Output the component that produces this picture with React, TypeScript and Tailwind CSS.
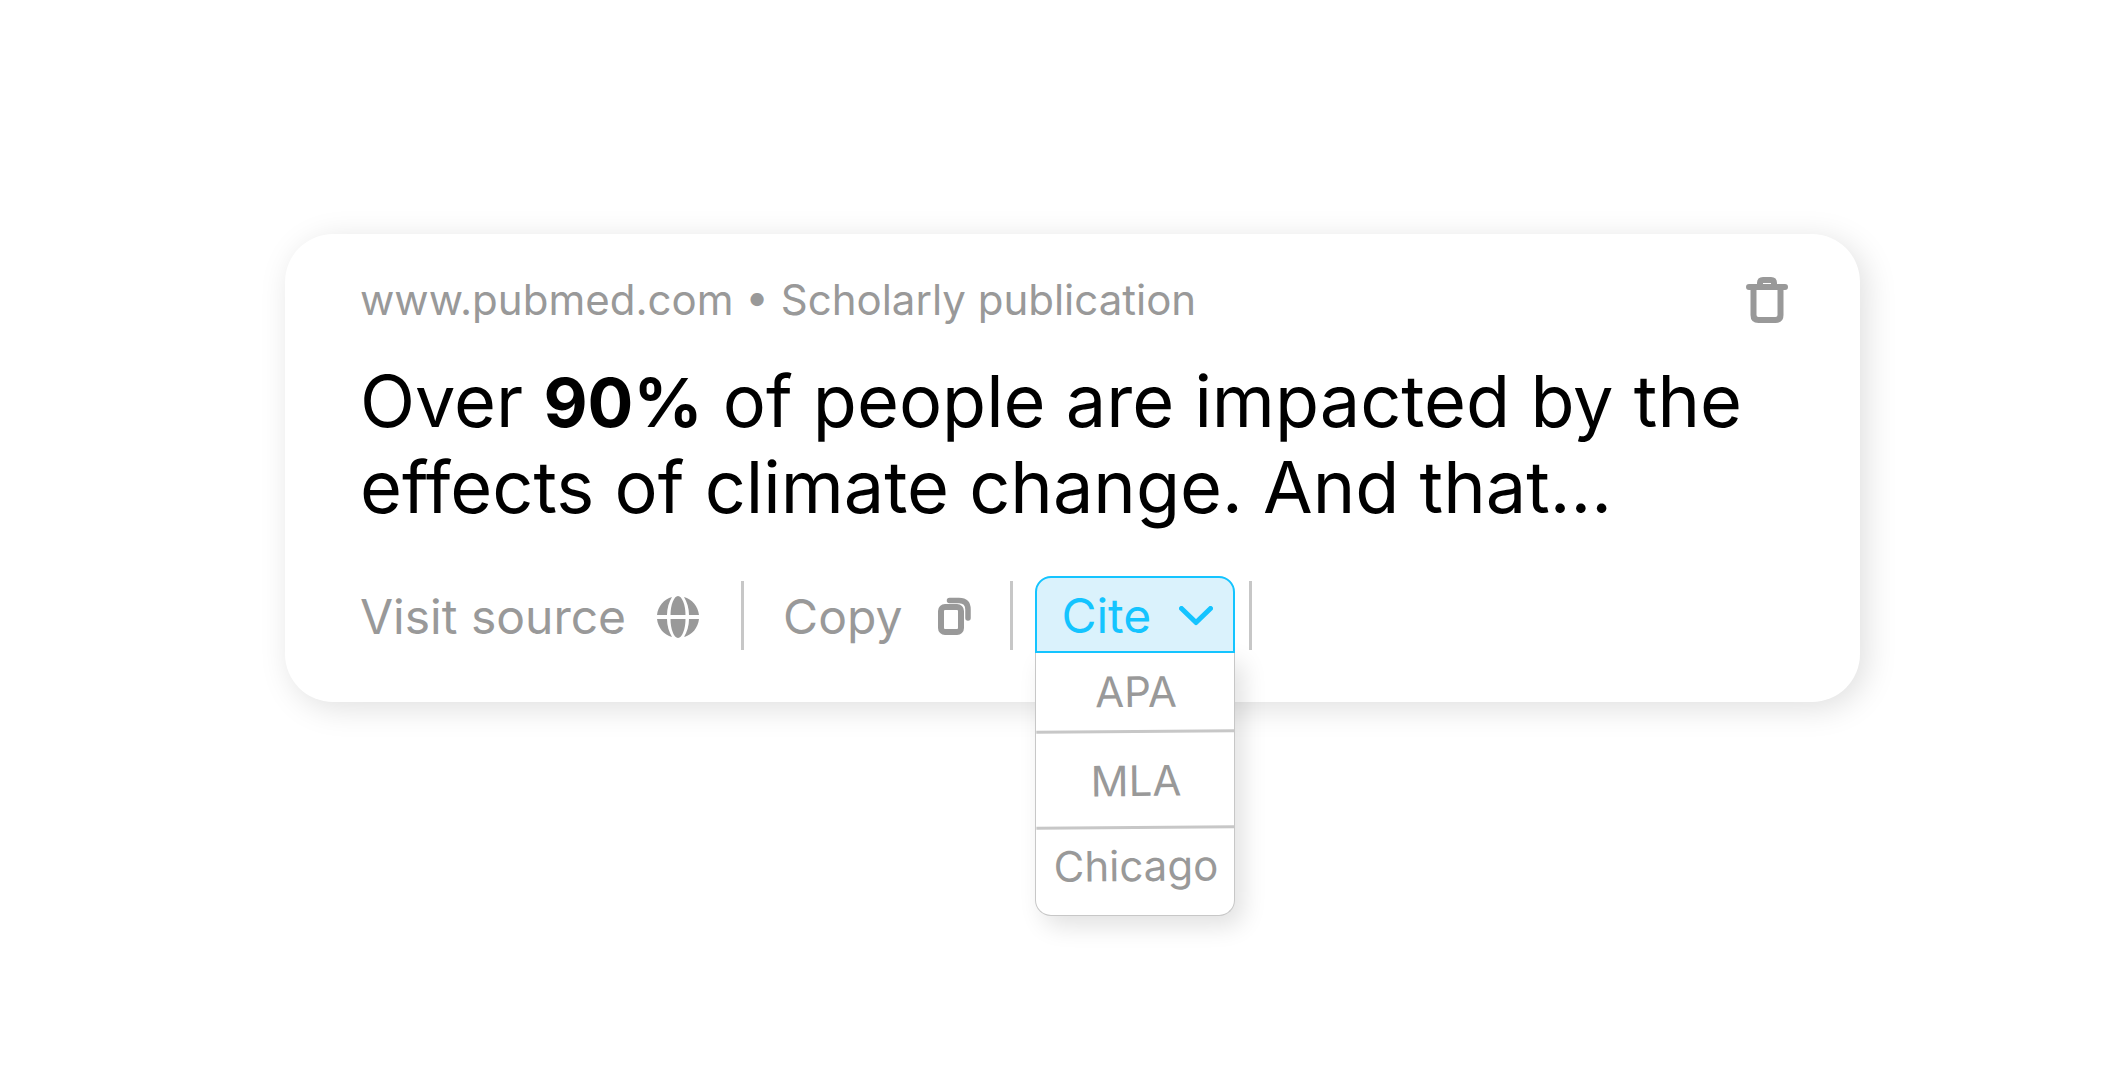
import { useState } from 'react'

const STYLES = [
  { name: 'APA', row: 'h-20 border-b-3' },
  { name: 'MLA', row: 'h-24 border-b-3 pt-0.5' },
  { name: 'Chicago', row: 'h-[86px] pb-3' },
]

function TrashIcon() {
  return (
    <svg width="42" height="48" viewBox="0 0 42 48" fill="none" stroke="currentColor" strokeWidth="6" strokeLinejoin="round" strokeLinecap="round" aria-hidden="true">
      <path d="M3 11H39M14 10V7Q14 4 17 4H25Q28 4 28 7V10" />
      <path d="M7.5 11V39Q7.5 44 12.5 44H29.500Q34.500 44 34.500 39V11" />
    </svg>
  )
}

function GlobeIcon() {
  return (
    <svg width="42" height="42" viewBox="0 0 42 42" fill="currentColor" aria-hidden="true">
      <path d="M21 0C17 0 13.500 9 13.500 19H28.500C28.500 9 25 0 21 0Z" />
      <path d="M21 42C17 42 13.500 33 13.500 23H28.500C28.500 33 25 42 21 42Z" />
      <path d="M15 1C7 3 1 10 0 19H10C10 12 12 6 15 1Z" />
      <path d="M27 1C35 3 41 10 42 19H32C32 12 30 6 27 1Z" />
      <path d="M15 41C7 39 1 32 0 23H10C10 30 12 36 15 41Z" />
      <path d="M27 41C35 39 41 32 42 23H32C32 30 30 36 27 41Z" />
    </svg>
  )
}

function CopyIcon() {
  return (
    <svg width="33" height="39" viewBox="0 0 33 39" fill="none" stroke="currentColor" aria-hidden="true">
      <rect x="3" y="10" width="20" height="25" rx="4" strokeWidth="6" />
      <path d="M11.500 3.500H21Q30 3.500 30 12.500V21" strokeWidth="5.500" strokeLinecap="round" />
    </svg>
  )
}

function ChevronIcon() {
  return (
    <svg width="34" height="20" viewBox="0 0 34 20" fill="none" stroke="currentColor" strokeWidth="5" strokeLinecap="round" strokeLinejoin="round" aria-hidden="true">
      <path d="M2.500 2.500L17 16.500L31.500 2.500" />
    </svg>
  )
}

function Divider() {
  return <span className="mt-0.5 h-[69px] w-[3px] shrink-0 bg-[#c7c7c7]" />
}

export default function App() {
  const [open, setOpen] = useState(true)

  return (
    <main className="min-h-screen bg-white pt-[234px] pr-[243px] pb-20 pl-[285px] font-['Inter',sans-serif] text-[#999]">
      <article className="rounded-[48px] bg-white pt-9 pr-[72px] pb-[49px] pl-[75px] shadow-[6px_6px_32px_rgba(0,0,0,0.13)]">
        <header className="flex items-center justify-between">
          <p className="text-[42px] leading-[60px]">www.pubmed.com • Scholarly publication</p>
          <button type="button" aria-label="Delete">
            <TrashIcon />
          </button>
        </header>

        <h1 className="mt-7 text-[72px] leading-[86px] text-black">
          Over <strong className="text-[68px] leading-none font-bold">90%</strong> of people are impacted by the effects of climate change. And that...
        </h1>

        <div className="mt-[46px] flex items-center text-[48px] leading-[60px]">
          <a href="#source" className="flex items-center gap-[31px] pt-1 pr-[42px]">
            Visit source
            <GlobeIcon />
          </a>
          <Divider />
          <button type="button" className="flex items-center gap-9 px-[39px] pt-1">
            Copy
            <CopyIcon />
          </button>
          <Divider />

          <div className="relative mr-[14px] ml-[22px] w-[200px]">
            <button
              type="button"
              aria-expanded={open}
              onClick={() => setOpen(!open)}
              className="relative z-10 flex h-[77px] w-full items-center justify-between rounded-t-2xl border-2 border-[#14c4ff] bg-[#daf2fc] pt-0.5 pr-5 pl-6 text-[#14c4ff]"
            >
              Cite
              <ChevronIcon />
            </button>

            {open && (
              <ul className="absolute top-full left-0 w-full rounded-b-2xl border border-t-0 border-[#c7c7c7] bg-white text-[42px] shadow-[8px_10px_24px_rgba(0,0,0,0.12)]">
                {STYLES.map((style) => (
                  <li key={style.name}>
                    <button
                      type="button"
                      className={`flex w-full -rotate-[0.5deg] items-center justify-center border-[#c7c7c7] pl-0.5 ${style.row}`}
                    >
                      {style.name}
                    </button>
                  </li>
                ))}
              </ul>
            )}
          </div>
          <Divider />
        </div>
      </article>
    </main>
  )
}
